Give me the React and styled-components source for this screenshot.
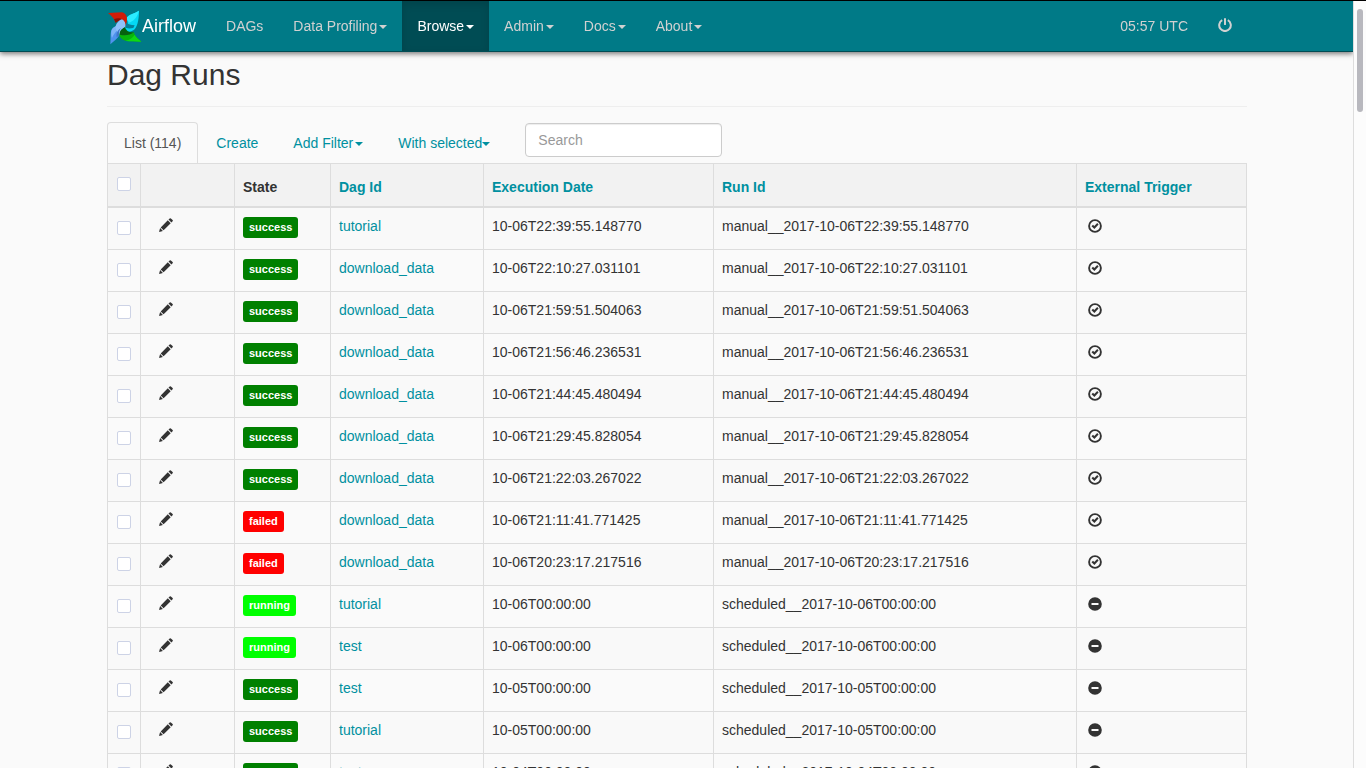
import { useState } from "react";
import styled, { createGlobalStyle } from "styled-components";

const GlobalStyle = createGlobalStyle`
  * {
    box-sizing: border-box;
  }
  body {
    margin: 0;
    background: #fafafa;
    color: #333;
    font-family: "Liberation Sans", Helvetica, Arial, sans-serif;
    font-size: 14px;
    line-height: 20px;
  }
  a {
    color: #0090a0;
    text-decoration: none;
  }
  button, input {
    font: inherit;
  }
`;

const Window = styled.div`
  display: flex;
  height: 100vh;
  border-top: 1px solid #000;
`;

const Page = styled.div`
  flex: 1;
  overflow-y: auto;
  scrollbar-width: none;
`;

const Gutter = styled.div`
  width: 13px;
  padding: 8px 3px;
  border-left: 1px solid #ddd;
  background: #fcfcfc;
`;

const Thumb = styled.div`
  width: 6px;
  height: 103px;
  border-radius: 3px;
  background: #b8b8be;
`;

const Container = styled.div`
  max-width: 1171px;
  margin: 0 auto;
  padding: 0 15px 0 16px;
`;

const Navbar = styled.header`
  position: sticky;
  top: 0;
  z-index: 10;
  background: #007a87;
  border-bottom: 1px solid #004c54;
  box-shadow: 0 2px 5px rgba(0, 0, 0, 0.5);
`;

const NavRow = styled(Container)`
  display: flex;
`;

const Brand = styled.a`
  display: flex;
  align-items: center;
  height: 50px;
  padding-right: 15px;
  color: #fff;
  font-size: 18px;
`;

const NavList = styled.ul`
  display: flex;
  margin: 0;
  padding: 0;
  list-style: none;
  margin-left: ${(props) => (props.$right ? "auto" : "0")};
`;

const NavLink = styled.a`
  display: block;
  height: 50px;
  padding: 15px;
  border: 0;
  cursor: pointer;
  color: ${(props) => (props.$active ? "#fff" : "#d1d1d1")};
  background: ${(props) => (props.$active ? "#004c54" : "none")};
  box-shadow: ${(props) => (props.$active ? "inset 0 3px 8px rgba(0, 0, 0, 0.125)" : "none")};
`;

const Caret = styled.span`
  display: inline-block;
  margin-left: ${(props) => (props.$tight ? "0" : "2px")};
  vertical-align: middle;
  border-top: 4px solid;
  border-left: 4px solid transparent;
  border-right: 4px solid transparent;
`;

const Title = styled.h2`
  margin: 0;
  padding: 6px 0 15px;
  border-bottom: 1px solid #eee;
  font-size: 30px;
  font-weight: 500;
  line-height: 33px;
`;

const Tabs = styled.ul`
  display: flex;
  gap: 1px;
  margin: 15px 0 0;
  padding: 0;
  list-style: none;
`;

const Tab = styled.a`
  display: block;
  padding: 10px 16px;
  border: 1px solid ${(props) => (props.$active ? "#ddd" : "transparent")};
  border-bottom: 0;
  border-radius: 4px 4px 0 0;
  background: none;
  color: ${(props) => (props.$active ? "#555" : "#0090a0")};
  cursor: pointer;
`;

const Search = styled.input`
  width: 197px;
  height: 34px;
  margin: 1px 0 0 17px;
  padding: 6px 12px;
  border: 1px solid #ccc;
  border-radius: 4px;
  background: #fff;
  box-shadow: inset 0 1px 1px rgba(0, 0, 0, 0.075);
  color: #555;
  &::placeholder {
    color: #999;
  }
`;

const Table = styled.table`
  width: 100%;
  table-layout: fixed;
  border-collapse: collapse;
`;

const Col = styled.col`
  width: ${(props) => props.$width || "auto"};
`;

const Th = styled.th`
  height: 43px;
  padding: 8px 8px 9px;
  border: 1px solid #ddd;
  border-bottom-width: 2px;
  background: #f2f2f2;
  text-align: left;
  vertical-align: bottom;
`;

const Td = styled.td`
  height: 42px;
  padding: 8px;
  border: 1px solid #ddd;
  vertical-align: top;
`;

const Tr = styled.tr`
  &:nth-child(odd) {
    background: #f9f9f9;
  }
  /* shares the thicker header border */
  &:first-child ${Td} {
    height: 43px;
  }
`;

const Check = styled.input.attrs({ type: "checkbox" })`
  appearance: none;
  display: block;
  width: 14px;
  height: 14px;
  margin: ${(props) => (props.$head ? "0 0 6px 1px" : "5px 0 0 1px")};
  border: 1px solid #cdd3e6;
  border-radius: 2px;
  background: #fff;
  &:checked {
    background: #0090a0;
  }
`;

const EditLink = styled.a`
  display: block;
  width: 14px;
  margin-left: 10px;
  padding-top: 2px;
  color: #333;
`;

const colors = { success: "#008000", failed: "#ff0000", running: "#00ff00" };

const Label = styled.span`
  display: block;
  width: fit-content;
  margin-top: 1px;
  padding: 0 6px;
  border-radius: 3px;
  background: ${(props) => colors[props.$state]};
  color: #fff;
  font-size: 11px;
  font-weight: bold;
  line-height: 21px;
`;

const Icon = styled.svg`
  display: block;
  width: 14px;
  height: 14px;
  fill: currentColor;
`;

const TriggerIcon = styled(Icon)`
  margin: 3px 0 0 3px;
`;

const PowerIcon = styled(Icon)`
  margin-top: 2px;
`;

const Pinwheel = () => (
  <svg width="35" height="35" viewBox="21 25 105 105" overflow="visible" aria-hidden="true">
    <path fill="#4f93ee" d="M31 131 C33 112 30 96 35 87 C40 77 52 76 70 78 L74 84 C62 90 60 106 46 118 Z" />
    <path fill="#7db4f8" d="M35 87 C40 77 52 72 70 80 C56 84 44 94 36 112 C33 102 33 94 35 87 Z" />
    <path fill="#04d8f4" d="M117 30 C117 52 114 74 104 86 C98 92 90 94 84 93 L74 80 C84 76 86 64 78 54 C86 40 102 40 117 30 Z" />
    <path fill="#2cecff" d="M117 30 C112 50 100 62 86 66 C86 60 82 56 78 54 C86 40 102 40 117 30 Z" />
    <path fill="#067f98" d="M78 54 C76 64 80 72 104 74 L100 82 C90 84 80 84 72 80 Z" />
    <path fill="#d01c08" d="M24 37 L66 35 C78 38 84 50 80 64 L74 80 L64 60 C58 58 52 62 47 66 C42 52 34 46 24 37 Z" />
    <path fill="#861006" d="M42 56 C54 50 70 52 76 70 L74 78 L66 58 C58 58 52 62 47 66 Z" />
    <path fill="#08b40c" d="M124 123 C104 122 88 123 76 120 C62 116 56 106 58 92 L74 80 C78 92 88 96 102 95 C104 108 114 112 124 123 Z" />
    <path fill="#10d814" d="M104 102 C108 110 116 116 124 123 C104 122 88 123 76 120 C88 118 98 112 104 102 Z" />
    <path fill="#076010" d="M102 95 C92 104 72 106 60 102 L58 90 L74 80 C78 92 88 96 102 95 Z" />
    <path fill="#8fc2fb" d="M46 78 C50 66 58 58 66 56 C74 60 78 68 76 78 C66 82 60 88 58 100 C52 96 48 88 46 78 Z" />
    <path fill="#3e78c8" d="M64 82 C58 86 56 96 58 104 L50 110 C48 98 52 88 64 82 Z" />
  </svg>
);

const Pencil = () => (
  <Icon viewBox="0 0 14 14" aria-hidden="true">
    <path d="M0 14 L1.1 10.1 L3.9 12.9 Z M1.7 9.4 L8.8 2.3 L11.7 5.2 L4.6 12.3 Z M9.5 1.6 L10.7 0.4 Q11.3 -0.1 11.9 0.4 L13.6 2.1 Q14.1 2.7 13.6 3.3 L12.4 4.5 Z" />
  </Icon>
);

const OkCircle = () => (
  <TriggerIcon viewBox="0 0 14 14" role="img" aria-label="true">
    <circle cx="7" cy="7" r="5.9" fill="none" stroke="currentColor" strokeWidth="1.9" />
    <path d="M3.5 7.2 L5 5.7 L6.3 7 L9.2 4 L10.6 5.5 L6.4 10 Z" />
  </TriggerIcon>
);

const MinusSign = () => (
  <TriggerIcon viewBox="0 0 14 14" role="img" aria-label="false">
    <path fillRule="evenodd" d="M7 0.2 A6.8 6.8 0 1 1 7 13.8 A6.8 6.8 0 1 1 7 0.2 Z M3.5 6 H10.5 V8 H3.5 Z" />
  </TriggerIcon>
);

const Power = () => (
  <PowerIcon viewBox="0 0 14 14" aria-hidden="true">
    <path fill="none" stroke="currentColor" strokeWidth="2" d="M4.2 2.2 A5.8 5.8 0 1 0 9.8 2.2" />
    <path d="M6 0.6 Q6 0 7 0 Q8 0 8 0.6 V6.4 Q8 7 7 7 Q6 7 6 6.4 Z" />
  </PowerIcon>
);

const menu = ["Data Profiling", "Browse", "Admin", "Docs", "About"];

const runs = [
  ["success", "tutorial", "10-06T22:39:55.148770", "manual"],
  ["success", "download_data", "10-06T22:10:27.031101", "manual"],
  ["success", "download_data", "10-06T21:59:51.504063", "manual"],
  ["success", "download_data", "10-06T21:56:46.236531", "manual"],
  ["success", "download_data", "10-06T21:44:45.480494", "manual"],
  ["success", "download_data", "10-06T21:29:45.828054", "manual"],
  ["success", "download_data", "10-06T21:22:03.267022", "manual"],
  ["failed", "download_data", "10-06T21:11:41.771425", "manual"],
  ["failed", "download_data", "10-06T20:23:17.217516", "manual"],
  ["running", "tutorial", "10-06T00:00:00", "scheduled"],
  ["running", "test", "10-06T00:00:00", "scheduled"],
  ["success", "test", "10-05T00:00:00", "scheduled"],
  ["success", "tutorial", "10-05T00:00:00", "scheduled"],
  ["success", "test", "10-04T00:00:00", "scheduled"],
];

const App = () => {
  const [selected, setSelected] = useState([]);
  const [search, setSearch] = useState("");

  const toggle = (i) => {
    setSelected(selected.includes(i) ? selected.filter((s) => s !== i) : [...selected, i]);
  };

  const toggleAll = (e) => {
    setSelected(e.target.checked ? runs.map((run, i) => i) : []);
  };

  const renderRows = runs.map(([state, dag, date, type], i) => (
    <Tr key={i}>
      <Td>
        <Check aria-label="Select record" checked={selected.includes(i)} onChange={() => toggle(i)} />
      </Td>
      <Td>
        <EditLink href="#edit" aria-label="Edit record">
          <Pencil />
        </EditLink>
      </Td>
      <Td>
        <Label $state={state}>{state}</Label>
      </Td>
      <Td>
        <a href="#dag">{dag}</a>
      </Td>
      <Td>{date}</Td>
      <Td>{`${type}__2017-${date}`}</Td>
      <Td>{type === "manual" ? <OkCircle /> : <MinusSign />}</Td>
    </Tr>
  ));

  return (
    <>
      <GlobalStyle />
      <Window>
        <Page>
          <Navbar>
            <NavRow as="nav">
              <Brand href="#home">
                <Pinwheel />
                <span>Airflow</span>
              </Brand>
              <NavList>
                <li>
                  <NavLink href="#dags">DAGs</NavLink>
                </li>
                {menu.map((item) => (
                  <li key={item}>
                    <NavLink as="button" type="button" $active={item === "Browse"}>
                      {item}
                      <Caret />
                    </NavLink>
                  </li>
                ))}
              </NavList>
              <NavList $right>
                <li>
                  <NavLink href="#time">05:57 UTC</NavLink>
                </li>
                <li>
                  <NavLink href="#logout" aria-label="Logout">
                    <Power />
                  </NavLink>
                </li>
              </NavList>
            </NavRow>
          </Navbar>
          <Container as="main">
            <Title>Dag Runs</Title>
            <Tabs>
              <li>
                <Tab href="#list" $active>
                  List (114)
                </Tab>
              </li>
              <li>
                <Tab href="#create">Create</Tab>
              </li>
              <li>
                <Tab as="button" type="button">
                  Add Filter
                  <Caret />
                </Tab>
              </li>
              <li>
                <Tab as="button" type="button">
                  With selected
                  <Caret $tight />
                </Tab>
              </li>
              <li>
                <Search
                  type="text"
                  aria-label="Search"
                  placeholder="Search"
                  value={search}
                  onChange={(e) => setSearch(e.target.value)}
                />
              </li>
            </Tabs>
            <Table>
              <colgroup>
                <Col $width="33px" />
                <Col $width="94px" />
                <Col $width="96px" />
                <Col $width="153px" />
                <Col $width="230px" />
                <Col $width="363px" />
                <Col />
              </colgroup>
              <thead>
                <tr>
                  <Th>
                    <Check
                      $head
                      aria-label="Select all records"
                      checked={selected.length === runs.length}
                      onChange={toggleAll}
                    />
                  </Th>
                  <Th />
                  <Th>State</Th>
                  <Th>
                    <a href="#dag_id">Dag Id</a>
                  </Th>
                  <Th>
                    <a href="#execution_date">Execution Date</a>
                  </Th>
                  <Th>
                    <a href="#run_id">Run Id</a>
                  </Th>
                  <Th>
                    <a href="#external_trigger">External Trigger</a>
                  </Th>
                </tr>
              </thead>
              <tbody>{renderRows}</tbody>
            </Table>
          </Container>
        </Page>
        <Gutter>
          <Thumb />
        </Gutter>
      </Window>
    </>
  );
};

export default App;
